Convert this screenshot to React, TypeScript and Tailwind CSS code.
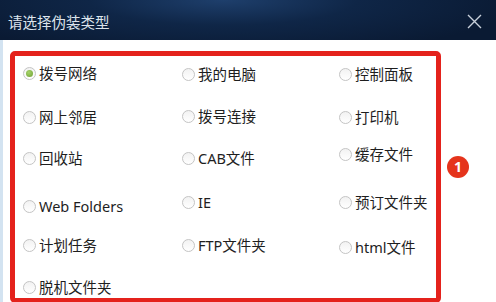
import React from "react";

type Item = { label: string; checked?: boolean; adj?: string };

const cols: Item[][] = [
  [
    { label: "拨号网络", checked: true },
    { label: "网上邻居" },
    { label: "回收站" },
    { label: "Web Folders", adj: "mt-[4px]" },
    { label: "计划任务" },
    { label: "脱机文件夹" },
  ],
  [
    { label: "我的电脑", adj: "mt-[1px]" },
    { label: "拨号连接", adj: "mt-[-1px]" },
    { label: "CAB文件" },
    { label: "IE" },
    { label: "FTP文件夹" },
  ],
  [
    { label: "控制面板", adj: "mt-[1px]" },
    { label: "打印机" },
    { label: "缓存文件", adj: "mt-[-4px]" },
    { label: "预订文件夹" },
    { label: "html文件", adj: "mt-[2px]" },
  ],
];

function Radio({ checked }: { checked?: boolean }) {
  return (
    <span className="flex h-[13px] w-[13px] shrink-0 items-center justify-center rounded-full border border-[#c4c4c4] bg-[linear-gradient(180deg,#f2f2f2,#ffffff)]">
      {checked && (
        <span className="h-[7px] w-[7px] rounded-full bg-[radial-gradient(circle_at_40%_35%,#a6d46a,#6e9f32)]" />
      )}
    </span>
  );
}

function Option({ item }: { item: Item }) {
  return (
    <div className={`flex h-[20px] items-center gap-[3px] ${item.adj ?? ""}`}>
      <Radio checked={item.checked} />
      <span className="whitespace-nowrap text-[14.5px] leading-none text-[#1e1e1e]">
        {item.label}
      </span>
    </div>
  );
}

export default function App() {
  const rows = [0, 1, 2, 3, 4, 5];
  return (
    <div
      className="flex h-[302px] w-[496px] flex-col overflow-hidden bg-white"
      style={{ fontFamily: '"Noto Sans", "Noto Sans CJK SC", sans-serif' }}
    >
      <div className="flex h-[40px] shrink-0 items-center justify-between bg-[radial-gradient(ellipse_60%_140%_at_45%_0%,#1e3f6c_0%,#0f2647_45%,#0a1a33_100%)] pl-[8px] pr-[14px] pt-[4px]">
        <span className="text-[14.5px] leading-none text-[#dde4ec]">请选择伪装类型</span>
        <svg width="15" height="15" viewBox="0 0 15 15" className="mb-[2px]">
          <path d="M1 1 L14 14 M14 1 L1 14" stroke="#c9d1db" strokeWidth="1.4" fill="none" />
        </svg>
      </div>
      <div className="relative flex-1 border-l-[3px] border-[#d3e3f1]">
        <div className="ml-[7px] mt-[11px] h-[252px] w-[431px] rounded-[5px] border-[5px] border-[#e4221c] pl-[8px] pt-[7px]">
          <div className="grid grid-cols-[159px_157px_1fr] grid-rows-[44px_41px_44px_43px_42px_20px] items-start">
            {rows.map((r) =>
              cols.map((c, ci) => {
                const it = c[r];
                return it ? <Option key={`${r}-${ci}`} item={it} /> : <div key={`${r}-${ci}`} />;
              })
            )}
          </div>
        </div>
        <div className="absolute left-[444px] top-[116px] flex h-[22px] w-[22px] items-center justify-center rounded-full bg-[#e5341c] text-[14px] font-bold leading-none text-white">
          1
        </div>
      </div>
    </div>
  );
}
